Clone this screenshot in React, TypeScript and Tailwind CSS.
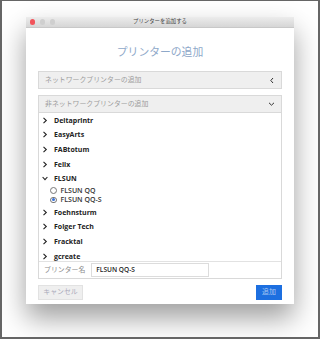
import React from "react";

const font = { fontFamily: '"Open Sans", "Noto Sans CJK JP", sans-serif' };

function ChevRight() {
  return (
    <svg width="6" height="7" viewBox="0 0 6 7" className="shrink-0">
      <polyline points="1.5,0.8 4.3,3.5 1.5,6.2" fill="none" stroke="#222" strokeWidth="1.1" />
    </svg>
  );
}
function ChevDown() {
  return (
    <svg width="6" height="7" viewBox="0 0 6 7" className="shrink-0">
      <polyline points="0.6,2 3,4.6 5.4,2" fill="none" stroke="#222" strokeWidth="1.1" />
    </svg>
  );
}

const groups = ["Deltaprintr", "EasyArts", "FABtotum", "Felix"];
const after = ["Foehnsturm", "Folger Tech", "Fracktal", "gcreate"];

function Row({ name, open }: { name: string; open?: boolean }) {
  return (
    <div className="h-[14.6px] flex items-center pl-[3px] gap-[6px] shrink-0">
      {open ? <ChevDown /> : <ChevRight />}
      <span className="text-[7px] font-bold text-[#222] leading-none">{name}</span>
    </div>
  );
}

function Radio({ name, checked }: { name: string; checked?: boolean }) {
  return (
    <div className="h-[9.3px] flex items-center pl-[11px] gap-[4px] shrink-0">
      <div className="w-[6.5px] h-[6.5px] rounded-full border border-[#777] bg-white flex items-center justify-center">
        {checked && <div className="w-[3px] h-[3px] rounded-full bg-[#3b73d9]" />}
      </div>
      <span className="text-[7px] font-semibold text-[#333] leading-none">{name}</span>
    </div>
  );
}

export default function App() {
  return (
    <div style={font} className="w-[320px] h-[339px] bg-white border-l-2 border-r-2 border-b-2 border-t border-[#666] overflow-hidden">
      <div className="pt-[16px] pl-[24px]">
        <div className="w-[268px] h-[287px] bg-white shadow-[0_14px_26px_rgba(0,0,0,0.38)] flex flex-col">
          <div className="h-[11px] bg-gradient-to-b from-[#ececec] to-[#d6d6d6] border-b border-[#c8c8c8] flex items-center relative">
            <div className="flex items-center gap-[4.5px] pl-[3.5px]">
              <div className="w-[5.5px] h-[5.5px] rounded-full bg-[#f2545b]" />
              <div className="w-[5.5px] h-[5.5px] rounded-full bg-[#cfcfcf]" />
              <div className="w-[5.5px] h-[5.5px] rounded-full bg-[#cfcfcf]" />
            </div>
            <div className="absolute inset-0 flex items-center justify-center text-[5.4px] text-[#444] leading-none">
              プリンターを追加する
            </div>
          </div>
          <div className="flex flex-col px-[12px]">
            <div className="h-[43px] flex items-center justify-center pt-[6px] text-[10.8px] text-[#8ea8c9] leading-none">
              プリンターの追加
            </div>
            <div className="h-[18px] bg-[#efefef] border border-[#d9d9d9] flex items-center justify-between pl-[6px] pr-[6px]">
              <span className="text-[6.9px] text-[#9c9c9c] leading-none">ネットワークプリンターの追加</span>
              <svg width="6" height="7" viewBox="0 0 6 7">
                <polyline points="4,1 1.8,3.5 4,6" fill="none" stroke="#333" strokeWidth="1" />
              </svg>
            </div>
            <div className="mt-[6px] border border-[#d9d9d9] flex flex-col">
              <div className="h-[17px] bg-[#efefef] border-b border-[#d9d9d9] flex items-center justify-between pl-[6px] pr-[6px]">
                <span className="text-[6.9px] text-[#9c9c9c] leading-none">非ネットワークプリンターの追加</span>
                <svg width="7" height="6" viewBox="0 0 7 6">
                  <polyline points="1,1.8 3.5,4.2 6,1.8" fill="none" stroke="#333" strokeWidth="1" />
                </svg>
              </div>
              <div className="h-[148px] overflow-hidden flex flex-col bg-white">
                {groups.map((g) => (
                  <Row key={g} name={g} />
                ))}
                <Row name="FLSUN" open />
                <Radio name="FLSUN QQ" />
                <Radio name="FLSUN QQ-S" checked />
                <div className="h-[0.4px] shrink-0" />
                {after.map((g) => (
                  <Row key={g} name={g} />
                ))}
              </div>
              <div className="h-[17px] border-t border-[#e2e2e2] flex items-center pl-[5px] gap-[6px]">
                <span className="text-[6.9px] text-[#8a8a8a] leading-none">プリンター名</span>
                <div className="w-[118px] h-[14px] border border-[#dcdcdc] bg-white flex items-center pl-[4px]">
                  <span className="text-[6.6px] font-semibold text-[#222] leading-none">FLSUN QQ-S</span>
                </div>
              </div>
            </div>
            <div className="mt-[6px] flex justify-between">
              <div className="w-[45px] h-[15px] bg-[#efefef] border border-[#e2e2e2] flex items-center justify-center text-[6.9px] text-[#aab] leading-none">
                キャンセル
              </div>
              <div className="w-[26px] h-[15px] bg-[#1d6fe0] flex items-center justify-center text-[6.9px] text-[#a9c8f2] leading-none">
                追加
              </div>
            </div>
          </div>
        </div>
      </div>
    </div>
  );
}
